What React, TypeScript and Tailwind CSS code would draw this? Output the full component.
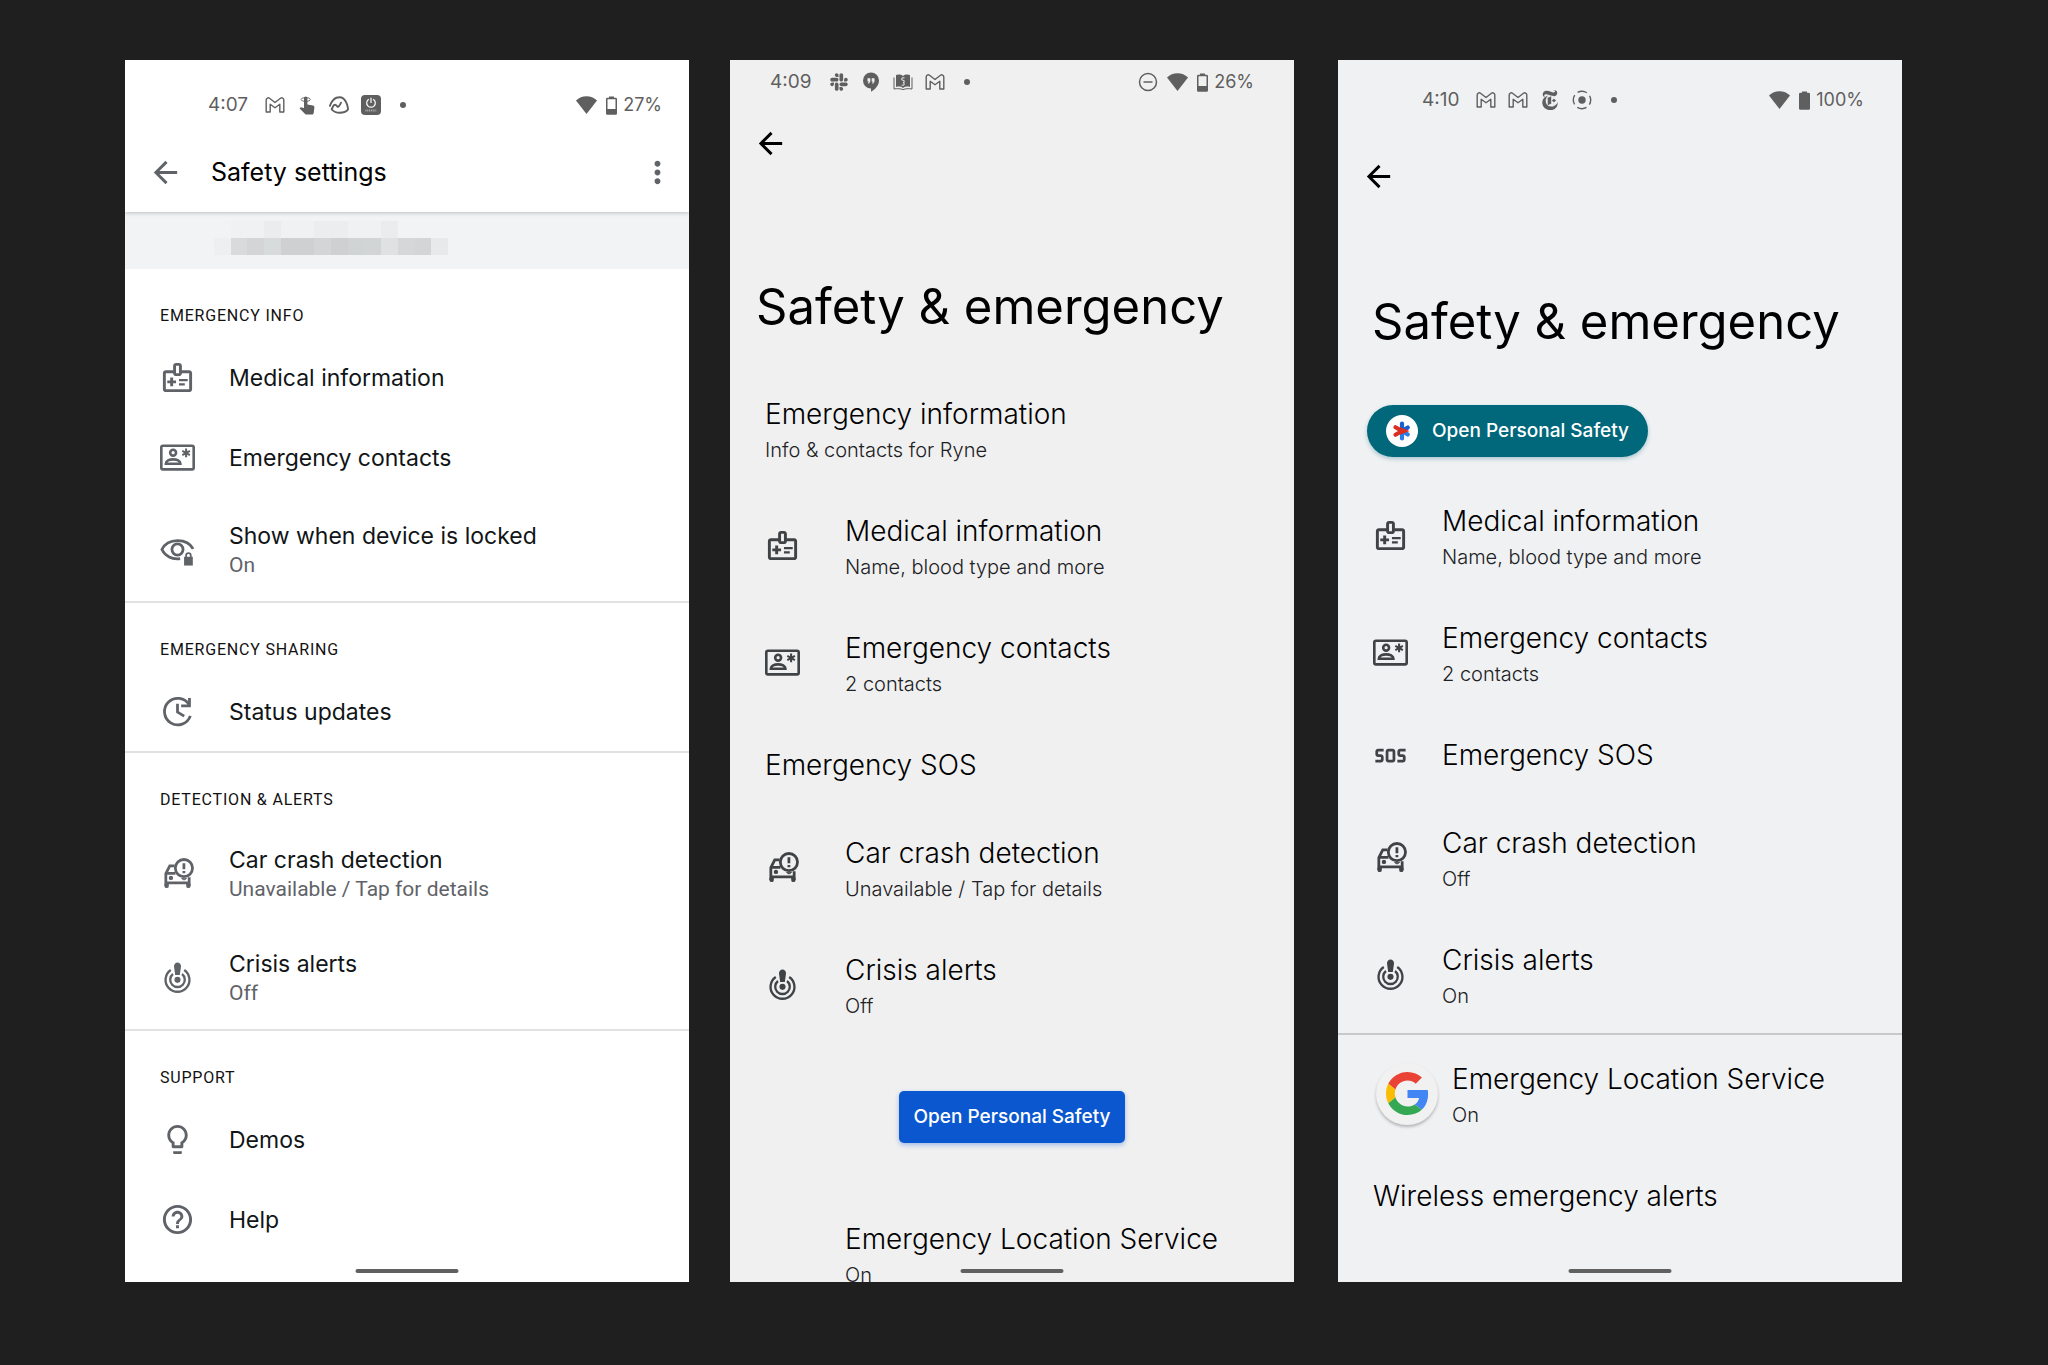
import type { ReactNode } from "react";
import { FaSlack } from "react-icons/fa";
import { MdArrowBack, MdHelpOutline, MdLightbulbOutline, MdMoreVert, MdOutlineMedicalInformation, MdSos } from "react-icons/md";
import { SiBasecamp, SiNewyorktimes } from "react-icons/si";

const iconSize = "h-[35px] w-[35px]";

/* ---------- status bar icons ---------- */

function GmailIcon() {
  return (
    <svg viewBox="0 0 20 20" className="h-5 w-5" fill="none" stroke="currentColor" strokeWidth="1.4" strokeLinejoin="round">
      <path d="M1.2 17V5c0-2 2-2.700 3.300-1.700L10 7.500l5.500-4.200C16.800 2.300 18.800 3 18.800 5v12h-4V9.300L10 12.800 5.200 9.300V17z" />
    </svg>
  );
}

function TapIcon() {
  return (
    <svg viewBox="0 0 20 20" className="h-5 w-5">
      <path d="M7 3.2a1.7 1.7 0 0 1 3.4 0v6.3l5.600 1.100c1 .3 1.500 1 1.400 2l-.7 5.400c-.1.900-.8 1.500-1.700 1.500H8.600L2.600 13.400l1.100-1.200 3.300.8z" fill="currentColor" />
      <ellipse cx="8.700" cy="4.500" rx="4.600" ry="1.900" fill="none" stroke="currentColor" strokeWidth=".9" />
    </svg>
  );
}

function PowerAppIcon() {
  return (
    <svg viewBox="0 0 20 20" className="h-5 w-5">
      <rect width="20" height="20" rx="4" fill="currentColor" />
      <path d="M10 3v4.500M7.400 4.500a4.300 4.300 0 1 0 5.200 0" fill="none" stroke="#fff" strokeWidth="1.200" strokeLinecap="round" />
      <path d="M4.500 15.500h11" stroke="#b4b4b4" strokeWidth="2" strokeDasharray="1 .8" />
    </svg>
  );
}

function HangoutsIcon() {
  return (
    <svg viewBox="0 0 20 20" className="h-5 w-5">
      <path d="M10 .5a8 8 0 0 1 8 8c0 4.800-3.800 9-8 11.200V16.500a8 8 0 0 1 0-16z" fill="currentColor" />
      <path d="M6.500 6.300h2.800v3.200L8 11.500H6.800l.9-2H6.500zM10.700 6.300h2.800v3.200l-1.300 2H11l.9-2h-1.200z" fill="#f0f0f0" />
    </svg>
  );
}

function BookIcon() {
  return (
    <svg viewBox="0 0 20 20" className="h-5 w-5">
      <path d="M3 3c2.500-.9 5-.6 7 1 2-1.600 4.500-1.900 7-1v12c-2.500-.8-5-.5-7 1-2-1.500-4.500-1.800-7-1z" fill="currentColor" />
      <path d="M1 5.500V17c3.500-.6 6.500-.4 9 .6 2.500-1 5.500-1.200 9-.6V5.500" fill="none" stroke="currentColor" />
      <path d="M11.500 5.800H10a1.200 1.200 0 0 0 0 2.500 1.200 1.200 0 0 1 0 2.500 1.200 1.200 0 0 1 0 2.400H8.500" fill="none" stroke="#e4e4e4" strokeWidth="1.100" />
    </svg>
  );
}

function RecordIcon() {
  return (
    <svg viewBox="0 0 20 20" className="h-5 w-5">
      <circle cx="10" cy="10" r="3.700" fill="currentColor" />
      <circle cx="10" cy="10" r="8.700" fill="none" stroke="currentColor" strokeWidth="1.400" strokeDasharray="9.670 4" strokeDashoffset="4.830" />
    </svg>
  );
}

function DoNotDisturbIcon() {
  return (
    <svg viewBox="0 0 20 20" className="h-5 w-5" fill="none" stroke="currentColor" strokeWidth="1.500">
      <circle cx="10" cy="10" r="8.500" />
      <path d="M5.500 10h9" />
    </svg>
  );
}

function WifiIcon() {
  return (
    <svg viewBox="0 0 21 18" className="h-[18px] w-[21px]" fill="currentColor">
      <path d="M10.500 18 0 4.600C2.800 1.700 6.500.3 10.500.3S18.200 1.700 21 4.600z" />
    </svg>
  );
}

function BatteryIcon({ full }: { full?: boolean }) {
  return (
    <svg viewBox="0 0 11 19" className="h-[19px] w-[11px]" fill="currentColor">
      <path d="M3 .5h5V2H3z" />
      <rect x=".75" y="2.600" width="9.500" height="15.500" rx=".6" fill={full ? "currentColor" : "none"} stroke="currentColor" strokeWidth="1.500" />
      <path d="M1 13h9v5H1z" />
    </svg>
  );
}

function Dot() {
  return (
    <span className="flex h-5 w-5 items-center justify-center">
      <span className="h-[6px] w-[6px] rounded-full bg-current" />
    </span>
  );
}

/* ---------- list icons ---------- */

function ContactIcon() {
  return (
    <svg viewBox="0 0 24 24" className={iconSize} fill="none" stroke="currentColor" strokeWidth="1.800">
      <rect x=".9" y="3.900" width="22.200" height="16.200" rx="1.100" strokeWidth="1.800" />
      <circle cx="9" cy="8.700" r="2" />
      <path d="M4 16.300c0-2 2.500-3 5-3s5 1 5 3z" />
      <path d="M17.900 5.900v6M15.300 7.400l5.200 3M20.500 7.400l-5.200 3" strokeWidth="1.400" />
    </svg>
  );
}

function EyeLockIcon() {
  return (
    <svg viewBox="0 0 24 24" className={iconSize} fill="none" stroke="currentColor" strokeWidth="1.900">
      <path d="M13.800 18.300c-5.600.9-10.300-1.900-12.500-6.300 4-8 17.300-8 21.400-.4" />
      <circle cx="12" cy="12" r="3.800" />
      <path d="M16.500 17h6v6h-6z" fill="currentColor" stroke="none" />
      <path d="M17.900 17.500v-1.400a1.600 1.600 0 0 1 3.200 0v1.400" strokeWidth="1.200" />
    </svg>
  );
}

function StatusIcon() {
  return (
    <svg viewBox="0 0 24 24" className={iconSize} fill="none" stroke="currentColor" strokeWidth="1.900">
      <path d="M20 7.400A9.100 9.100 0 1 0 20.800 15" />
      <path d="M20.200 2.700v5.400h-5.700" />
      <path d="M12 6.700v5.700l4.600 2.800" />
    </svg>
  );
}

function CarCrashIcon() {
  return (
    <svg viewBox="0 0 24 24" className={iconSize} fill="none" stroke="currentColor" strokeWidth="1.900">
      <path d="M10 6.800H6.700l-2.700 5.200V20.500M4 11.900h6.600M4 18.500h16M20 20.500v-6" />
      <path d="M3.050 19h3v1.500a1 1 0 0 1-3 0zM17.950 19h3v1.500a1 1 0 0 1-3 0z" fill="currentColor" stroke="none" />
      <circle cx="7.500" cy="15" r="1.500" fill="currentColor" stroke="none" />
      <path d="M14.800 15.100c1.200.4 2.200.4 3.400 0-.4 1.600-2.900 1.700-3.400 0z" fill="currentColor" strokeWidth=".5" />
      <circle cx="16.400" cy="8.300" r="5.900" />
      <path d="M16.400 4.900v4.200M16.400 10.300v1.600" />
    </svg>
  );
}

function CrisisIcon() {
  return (
    <svg viewBox="0 0 24 24" className={iconSize} fill="none" stroke="currentColor" strokeWidth="1.600">
      <path d="M16.600 6.800a8.200 8.200 0 1 1-9.200 0" />
      <path d="M15.100 9.600a5 5 0 1 1-6.200 0" />
      <circle cx="12" cy="13.600" r="2.100" fill="currentColor" stroke="none" />
      <path d="M12 1.800a2.400 2.400 0 0 1 2.400 2.600l-.8 5.800h-3.200l-.8-5.800A2.400 2.400 0 0 1 12 1.800z" fill="currentColor" stroke="none" />
    </svg>
  );
}

function SafetyBadge() {
  return (
    <span className="flex h-8 w-8 items-center justify-center rounded-full bg-white">
      <svg viewBox="0 0 20 20" className="h-5 w-5" strokeLinecap="round" strokeWidth="4.200">
        <path d="M10 10v7.500M10 10l5.800 3.500" stroke="#2b7de9" />
        <path d="M10 2.500V10l5.800-3.500" stroke="#1a5fd0" fill="none" />
        <path d="M3.500 6.200 10 10l-6.500 3.800" stroke="#d93025" fill="none" />
        <path d="M8.500 6.300 17.500 10l-9 3.700z" fill="#d93025" />
      </svg>
    </span>
  );
}

function GoogleBadge() {
  return (
    <span className="flex h-[62px] w-[62px] items-center justify-center rounded-full bg-[#f1f1f1] shadow-[0_2px_3px_rgba(0,0,0,0.25)]">
      <svg viewBox="0 0 48 48" className="h-[43px] w-[43px]">
        <path fill="#EA4335" d="M24 9.5c3.54 0 6.71 1.22 9.21 3.6l6.85-6.85C35.9 2.38 30.47 0 24 0 14.62 0 6.51 5.38 2.56 13.22l7.98 6.19C12.43 13.72 17.74 9.5 24 9.5z" />
        <path fill="#4285F4" d="M46.98 24.55c0-1.57-.15-3.09-.38-4.55H24v9.02h12.94c-.58 2.96-2.26 5.48-4.78 7.18l7.73 6c4.51-4.18 7.09-10.36 7.09-17.65z" />
        <path fill="#FBBC05" d="M10.53 28.59c-.48-1.45-.76-2.99-.76-4.59s.27-3.14.76-4.59l-7.98-6.19C.92 16.46 0 20.12 0 24c0 3.88.92 7.54 2.56 10.78l7.97-6.19z" />
        <path fill="#34A853" d="M24 48c6.48 0 11.93-2.13 15.89-5.81l-7.73-6c-2.15 1.45-4.92 2.3-8.16 2.3-6.26 0-11.57-4.22-13.47-9.91l-7.98 6.19C6.51 42.62 14.62 48 24 48z" />
      </svg>
    </span>
  );
}

/* ---------- shared pieces ---------- */

type StatusBarProps = { time: string; battery: string; full?: boolean; className: string; left: ReactNode; right?: ReactNode };

function StatusBar({ time, battery, full, className, left, right }: StatusBarProps) {
  return (
    <div className={`flex items-center justify-between text-[#5f5f5f] ${className}`}>
      <div className="flex items-center gap-3">
        <span className="mr-[5px] text-[19px] leading-6">{time}</span>
        {left}
        <Dot />
      </div>
      <div className="flex items-center gap-[9px]">
        {right}
        <WifiIcon />
        <div className="flex items-center gap-[6px]">
          <BatteryIcon full={full} />
          <span className="text-[18px] leading-6">{battery}</span>
        </div>
      </div>
    </div>
  );
}

function BackButton() {
  return (
    <button aria-label="Back" className="block">
      <MdArrowBack className={iconSize} />
    </button>
  );
}

function HomeHandle() {
  return <div className="absolute bottom-[9px] left-1/2 h-1 w-[103px] -translate-x-1/2 rounded-sm bg-[#606060]" />;
}

function Section({ title, children }: { title: string; children: ReactNode }) {
  return (
    <section className="border-b-2 border-[#e1e2e4] last:border-b-0">
      <h2 className="px-[35px] pt-[35px] pb-[9px] font-[Roboto,sans-serif] text-base leading-6 tracking-wider text-[#111] uppercase">{title}</h2>
      {children}
    </section>
  );
}

function SettingsRow({ icon, title, note }: { icon: ReactNode; title: string; note?: string }) {
  return (
    <button className={`flex w-full items-center gap-[34px] px-[35px] text-left text-[#5f6368] ${note ? "h-[104px]" : "h-20"}`}>
      {icon}
      <span className="pt-[2px]">
        <span className="block text-[23px] leading-[30px] text-[#111517]">{title}</span>
        {note && <span className="block font-[Roboto,sans-serif] text-[21px] leading-7">{note}</span>}
      </span>
    </button>
  );
}

type RowProps = { icon?: ReactNode; title: string; note?: string; className?: string };

function Row({ icon, title, note, className = "gap-[34px] px-[35px]" }: RowProps) {
  return (
    <button className={`flex w-full items-center text-left ${className}`}>
      {icon && <span className="flex min-w-[35px] justify-center text-[#3f4345]">{icon}</span>}
      <span className={`pt-[25px] ${note ? "pb-5" : "pb-[25px]"}`}>
        <span className="block text-[28px] leading-[38px] font-light text-black">{title}</span>
        {note && <span className="block text-[20px] leading-[34px] font-light text-[#202124]">{note}</span>}
      </span>
    </button>
  );
}

function PageTitle({ className, children }: { className: string; children: ReactNode }) {
  return <h1 className={`text-[49px] leading-[60px] whitespace-nowrap text-black ${className}`}>{children}</h1>;
}

/* ---------- redacted account name ---------- */

const mosaic = [
  "bg-[#f1f3f5]", "bg-[#f0f1f3]", "bg-[#f0f1f3]", "bg-[#ebecee]", "bg-[#f0f1f3]", "bg-[#f0f1f3]", "bg-[#ecedef]",
  "bg-[#ecedef]", "bg-[#f0f1f3]", "bg-[#f0f1f3]", "bg-[#ebecee]", "bg-[#f1f3f5]", "bg-[#f1f3f5]", "bg-[#f1f3f5]",
  "bg-[#eeeff1]", "bg-[#d9dadc]", "bg-[#d4d5d7]", "bg-[#d7dbdc]", "bg-[#cfd0d2]", "bg-[#cfd0d2]", "bg-[#d4d5d7]",
  "bg-[#cfd0d2]", "bg-[#d0d4d5]", "bg-[#d1d5d6]", "bg-[#e0e1e3]", "bg-[#d6d7d9]", "bg-[#d4d5d7]", "bg-[#e8e9eb]",
];

/* ---------- screens ---------- */

function SafetySettings() {
  return (
    <main className="relative mr-[41px] min-w-0 flex-1 overflow-hidden bg-white">
      <header className="relative shadow-[0_1px_4px_rgba(0,0,0,0.22)]">
        <StatusBar
          time="4:07"
          battery="27%"
          className="h-[72px] pt-[18px] pr-[27px] pl-[83px]"
          left={<><GmailIcon /><TapIcon /><SiBasecamp className="h-5 w-5" /><PowerAppIcon /></>}
        />
        <div className="flex h-20 items-center pr-[14px] pl-[23px] text-[#5f6368]">
          <BackButton />
          <h1 className="ml-7 flex-1 text-[25px] leading-8 text-black">Safety settings</h1>
          <button aria-label="More options"><MdMoreVert className={iconSize} /></button>
        </div>
      </header>
      <div className="h-[57px] bg-[#f1f3f5] pt-[9px] pl-[89px]">
        <div className="grid h-[34px] w-[234px] grid-cols-14">
          {mosaic.map((color, i) => <span key={i} className={color} />)}
        </div>
      </div>
      <div>
        <Section title="Emergency info">
          <SettingsRow icon={<MdOutlineMedicalInformation className={iconSize} />} title="Medical information" />
          <SettingsRow icon={<ContactIcon />} title="Emergency contacts" />
          <SettingsRow icon={<EyeLockIcon />} title="Show when device is locked" note="On" />
        </Section>
        <Section title="Emergency sharing">
          <SettingsRow icon={<StatusIcon />} title="Status updates" />
        </Section>
        <Section title="Detection & alerts">
          <SettingsRow icon={<CarCrashIcon />} title="Car crash detection" note="Unavailable / Tap for details" />
          <SettingsRow icon={<CrisisIcon />} title="Crisis alerts" note="Off" />
        </Section>
        <Section title="Support">
          <SettingsRow icon={<MdLightbulbOutline className={iconSize} />} title="Demos" />
          <SettingsRow icon={<MdHelpOutline className={iconSize} />} title="Help" />
        </Section>
      </div>
      <HomeHandle />
    </main>
  );
}

function SafetyEmergencyOld() {
  const row = "gap-[45px] px-[35px]";
  return (
    <main className="relative mr-[44px] min-w-0 flex-1 overflow-hidden bg-[#f0f0f0]">
      <StatusBar
        time="4:09"
        battery="26%"
        className="h-11 px-10"
        left={<><FaSlack className="h-5 w-5" /><HangoutsIcon /><BookIcon /><GmailIcon /></>}
        right={<DoNotDisturbIcon />}
      />
      <div className="pt-[22px] pl-[23px]"><BackButton /></div>
      <PageTitle className="mt-[116px] mb-[33px] pl-[26px]">Safety &amp; emergency</PageTitle>
      <Row title="Emergency information" note="Info & contacts for Ryne" />
      <Row className={row} icon={<MdOutlineMedicalInformation className={iconSize} />} title="Medical information" note="Name, blood type and more" />
      <Row className={row} icon={<ContactIcon />} title="Emergency contacts" note="2 contacts" />
      <Row title="Emergency SOS" />
      <Row className={row} icon={<CarCrashIcon />} title="Car crash detection" note="Unavailable / Tap for details" />
      <Row className={row} icon={<CrisisIcon />} title="Crisis alerts" note="Off" />
      <div className="flex justify-center pt-12 pb-[52px]">
        <button className="h-[52px] rounded-[5px] bg-[#0b57d0] px-[14px] text-[19px] font-medium text-white shadow-[0_2px_5px_rgba(11,87,208,0.35)]">Open Personal Safety</button>
      </div>
      <Row className="pl-[115px]" title="Emergency Location Service" note="On" />
      <HomeHandle />
    </main>
  );
}

function SafetyEmergencyNew() {
  return (
    <main className="relative min-w-0 flex-1 overflow-hidden bg-[#f0f1f3]">
      <StatusBar
        time="4:10"
        battery="100%"
        full
        className="h-20 pr-[38px] pl-[84px]"
        left={<><GmailIcon /><GmailIcon /><SiNewyorktimes className="h-5 w-5" /><RecordIcon /></>}
      />
      <div className="pt-[19px] pl-[23px]"><BackButton /></div>
      <PageTitle className="mt-[98px] pl-[34px]">Safety &amp; emergency</PageTitle>
      <button className="mt-[53px] mb-5 ml-[29px] flex h-[52px] items-center gap-[14px] rounded-full bg-[#00687a] px-[19px] text-[19px] font-medium text-white shadow-[0_2px_4px_rgba(0,104,122,0.3)]">
        <SafetyBadge />
        Open Personal Safety
      </button>
      <Row icon={<MdOutlineMedicalInformation className={iconSize} />} title="Medical information" note="Name, blood type and more" />
      <Row icon={<ContactIcon />} title="Emergency contacts" note="2 contacts" />
      <Row icon={<MdSos className="h-[33px] w-[33px]" />} title="Emergency SOS" />
      <Row icon={<CarCrashIcon />} title="Car crash detection" note="Off" />
      <Row icon={<CrisisIcon />} title="Crisis alerts" note="On" />
      <div className="border-t-2 border-[#c8c9cb]">
        <Row className="gap-[14px] px-[38px]" icon={<GoogleBadge />} title="Emergency Location Service" note="On" />
        <Row title="Wireless emergency alerts" />
      </div>
      <HomeHandle />
    </main>
  );
}

export default function App() {
  return (
    <div className="flex h-screen bg-[#1f1f1f] pt-[60px] pr-[146px] pb-[83px] pl-[125px] font-[Inter,sans-serif]">
      <SafetySettings />
      <SafetyEmergencyOld />
      <SafetyEmergencyNew />
    </div>
  );
}
